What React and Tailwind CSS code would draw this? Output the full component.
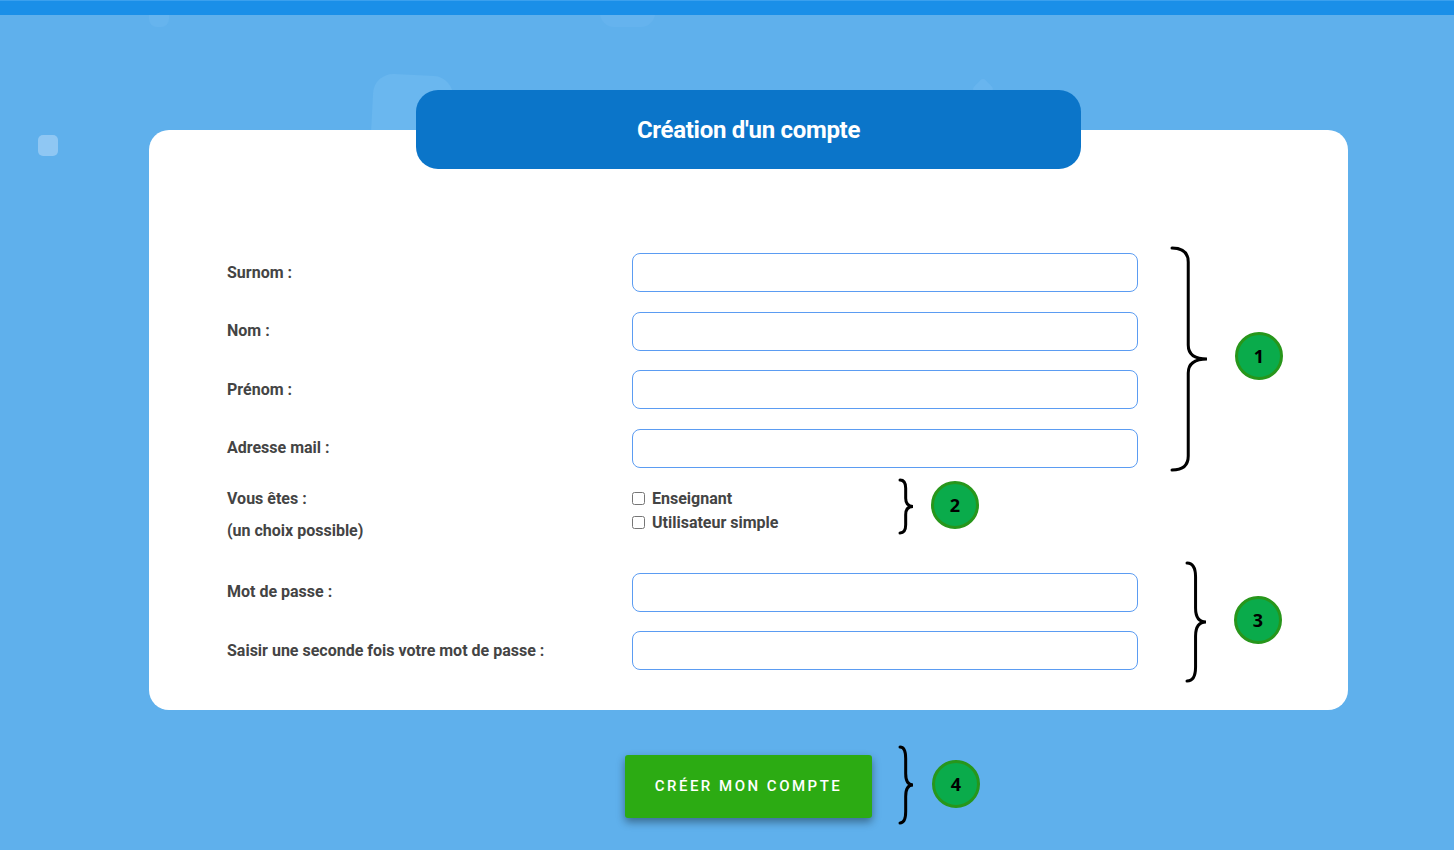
import React from "react";

function Brace({ w, h, style }) {
  const xv = w * 0.48;
  const mid = h / 2;
  const r = Math.min(14, h / 7);
  const d = `M2 2 Q ${xv} 2 ${xv} ${r + 2} L ${xv} ${mid - r} Q ${xv} ${mid} ${w - 1} ${mid} Q ${xv} ${mid} ${xv} ${mid + r} L ${xv} ${h - r - 2} Q ${xv} ${h - 2} 2 ${h - 2}`;
  return (
    <svg
      width={w}
      height={h}
      viewBox={`0 0 ${w} ${h}`}
      className="absolute overflow-visible"
      style={style}
    >
      <path d={d} fill="none" stroke="#000" strokeWidth="3" strokeLinejoin="miter" strokeLinecap="round" />
    </svg>
  );
}

function Badge({ n, style }) {
  return (
    <div
      className="absolute w-[48px] h-[48px] rounded-full bg-[#0aab4b] border-[3px] border-[#27961b] flex items-center justify-center text-[18px] font-bold text-black"
      style={{ fontFamily: "'Open Sans', 'Noto Sans', sans-serif", ...style }}
    >
      {n}
    </div>
  );
}

function Row({ label, className = "" }) {
  return (
    <div className={`flex items-center ${className}`}>
      <div className="w-[405px] text-[16px] font-bold text-[#444]">{label}</div>
      <input
        type="text"
        className="w-[506px] h-[39px] rounded-[8px] border border-[#5b9cf2] bg-white outline-none"
      />
    </div>
  );
}

export default function App() {
  return (
    <div
      className="relative w-[1454px] h-[850px] overflow-hidden bg-[#5fb0ec]"
      style={{ fontFamily: "Roboto, 'Liberation Sans', sans-serif" }}
    >
      {/* decorative shapes */}
      <div className="absolute left-[38px] top-[135px] w-[20px] h-[21px] rounded-[5px] bg-[#8fc7f3]" />
      <div className="absolute left-[372px] top-[75px] w-[80px] h-[80px] rounded-[20px] bg-[#6ab7ef] rotate-[3deg]" />
      <div className="absolute left-[149px] top-[10px] w-[20px] h-[17px] rounded-b-[8px] bg-[#66b4ee]" />
      <div className="absolute left-[600px] top-[8px] w-[55px] h-[19px] rounded-b-[14px] bg-[#65b3ee]" />
      <div className="absolute left-[975px] top-[81px] w-[16px] h-[16px] rounded-[4px] rotate-45 bg-[#68b5ef]" />

      <div className="relative z-10 h-[15px] bg-[#1a8fe8] border-t border-[#3aa0ee]" />

      <div className="relative mt-[75px] ml-[149px] w-[1199px]">
        <div className="relative z-10 mx-auto w-[665px] h-[79px] rounded-[22px] bg-[#0b75c9] flex items-center justify-center">
          <h1 className="text-white text-[24px] font-bold tracking-[-0.3px]">Création d'un compte</h1>
        </div>
        <div className="-mt-[39px] bg-white rounded-[20px] pt-[123px] pb-[40px] pl-[78px]">
          <div className="flex flex-col gap-[19.5px]">
            <Row label="Surnom :" />
            <Row label="Nom :" />
            <Row label="Prénom :" />
            <Row label="Adresse mail :" />
          </div>
          <div className="flex mt-[19px] text-[16px] font-bold text-[#444]">
            <div className="w-[405px]">
              <div className="leading-[24px]">Vous êtes :</div>
              <div className="leading-[24px] mt-[8px]">(un choix possible)</div>
            </div>
            <div>
              <label className="flex items-center h-[24px]">
                <input type="checkbox" className="w-[13px] h-[13px] m-0 mr-[7px]" />
                Enseignant
              </label>
              <label className="flex items-center h-[24px]">
                <input type="checkbox" className="w-[13px] h-[13px] m-0 mr-[7px]" />
                Utilisateur simple
              </label>
            </div>
          </div>
          <div className="flex flex-col gap-[19.5px] mt-[30px]">
            <Row label="Mot de passe :" />
            <Row label="Saisir une seconde fois votre mot de passe :" />
          </div>
        </div>
        <div className="flex justify-center mt-[45px]">
          <button className="w-[247px] h-[63px] rounded-[3px] bg-[#2cab13] text-white text-[15px] font-medium tracking-[2.5px] shadow-[0_4px_8px_rgba(0,0,0,0.4)]">
            CRÉER MON COMPTE
          </button>
        </div>
      </div>

      {/* annotations */}
      <Brace w={38} h={226} style={{ left: 1170, top: 246 }} />
      <Badge n="1" style={{ left: 1235, top: 332 }} />
      <Brace w={16} h={57} style={{ left: 898, top: 478 }} />
      <Badge n="2" style={{ left: 931, top: 481 }} />
      <Brace w={22} h={122} style={{ left: 1185, top: 561 }} />
      <Badge n="3" style={{ left: 1234, top: 596 }} />
      <Brace w={16} h={80} style={{ left: 898, top: 745 }} />
      <Badge n="4" style={{ left: 932, top: 760 }} />
    </div>
  );
}
